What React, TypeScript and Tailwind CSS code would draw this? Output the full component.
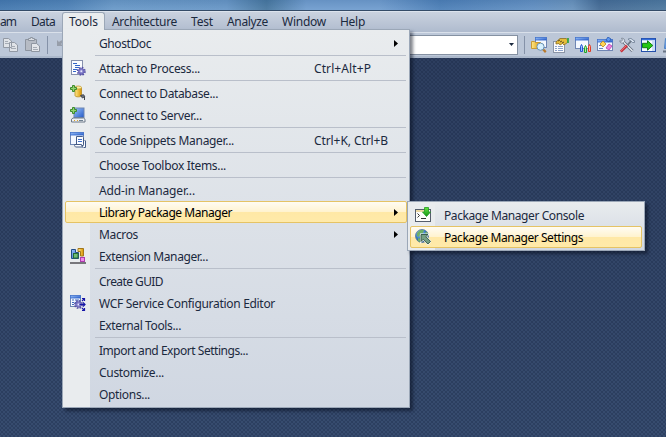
import React, { useLayoutEffect, useRef } from "react";

/** Text whose tracking is adjusted so that it spans the given width. */
function Label({ text, width, className = "" }: { text: string; width: number; className?: string }) {
  const ref = useRef<HTMLSpanElement>(null);
  useLayoutEffect(() => {
    const el = ref.current;
    if (!el) return;
    el.style.letterSpacing = "0px";
    const natural = el.getBoundingClientRect().width;
    el.style.letterSpacing = `${(width - natural) / text.length}px`;
  }, [text, width]);
  return (
    <span ref={ref} className={`inline-block whitespace-pre ${className}`}>
      {text}
    </span>
  );
}

function Svg({ children }: { children: React.ReactNode }) {
  return (
    <svg width="16" height="16" viewBox="0 0 16 16" fill="none" className="block shrink-0">
      {children}
    </svg>
  );
}

function Defs() {
  return (
    <svg width="0" height="0" className="absolute">
      <defs>
        <linearGradient id="blue" x1="0" y1="0" x2="1" y2="1">
          <stop offset="0" stopColor="#9cc4fb" />
          <stop offset="1" stopColor="#2459c6" />
        </linearGradient>
        <linearGradient id="gold" x1="0" y1="0" x2="1" y2="0">
          <stop offset="0" stopColor="#ffe98a" />
          <stop offset="1" stopColor="#d99300" />
        </linearGradient>
        <linearGradient id="green" x1="0" y1="0" x2="0" y2="1">
          <stop offset="0" stopColor="#63e23d" />
          <stop offset="1" stopColor="#149414" />
        </linearGradient>
        <radialGradient id="globe" cx="0.35" cy="0.3" r="0.8">
          <stop offset="0" stopColor="#a9d2ff" />
          <stop offset="0.5" stopColor="#397fc4" />
          <stop offset="1" stopColor="#173b75" />
        </radialGradient>
      </defs>
    </svg>
  );
}

const Plus = () => <path d="M2.5 0.5h2v2h2v2h-2v2h-2v-2h-2v-2h2z" fill="#92d36e" stroke="#3c8b2c" />;
const Gear = ({ x, y }: { x: number; y: number }) => (
  <g transform={`translate(${x} ${y})`}>
    <circle r="3.6" stroke="#5550a5" strokeWidth="1.8" strokeDasharray="1.6 1.23" />
    <circle r="2.8" fill="#8581cc" stroke="#6661b4" />
    <circle r="1" fill="#e8e8fb" />
  </g>
);
const Win = ({ w = 14, h = 12, x = 0.5, y = 0.5 }: { w?: number; h?: number; x?: number; y?: number }) => (
  <>
    <rect x={x} y={y} width={w} height={h} fill="#f4f8ff" stroke="#6f86b3" />
    <rect x={x} y={y} width={w} height="2.6" fill="url(#blue)" stroke="#3d70cf" strokeWidth="0.6" />
  </>
);

const icons: Record<string, React.ReactNode> = {
  process: (
    <Svg>
      <rect x="1.5" y="0.5" width="11" height="14" fill="#fbfcff" stroke="#8791ad" />
      <path d="M3 3.5h4M5 5.5h5M5 7.5h4M3 9.5h4M3 11.5h3" stroke="#3566c8" />
      <Gear x={11.3} y={11.3} />
    </Svg>
  ),
  database: (
    <Svg>
      <path d="M5 3v7.5c0 1.8 6.5 1.8 6.5 0V3z" fill="url(#gold)" stroke="#b98a1c" strokeWidth="0.8" />
      <ellipse cx="8.2" cy="2.5" rx="3.3" ry="1.5" fill="#ffed9b" stroke="#c09a35" strokeWidth="0.8" />
      <path d="M10.5 10.5l3-.8 1.2 1.8-2.2 1.5z" fill="#6e737d" stroke="#41464f" />
      <path d="M14.5 11.5v3.5" stroke="#41464f" />
      <Plus />
    </Svg>
  ),
  server: (
    <Svg>
      <rect x="4" y="1" width="10" height="9.5" fill="url(#blue)" stroke="#6e86b0" />
      <path d="M1.5 15v-2.8l1.5-1.2h10.5l1.5 1.2V15z" fill="#edf0f4" stroke="#6d7887" />
      <path d="M4 13.5h1M7 13.5h1" stroke="#e0a527" />
      <path d="M9 13.5h4" stroke="#6e8090" />
      <Plus />
    </Svg>
  ),
  snippets: (
    <Svg>
      <Win w={13} h={12} />
      <path d="M6.5 4.5h6l1 1v8h-7z" fill="#fbfcff" stroke="#455c87" />
      <path d="M8 7.5h4M8 9.5h4" stroke="#3d6eca" />
      <path d="M4.5 12.5h7c.2 1.5.7 2.5 1.5 2.5H6c-1 0-1.5-1-1.5-2.5zM14.5 8l1 1v6.5h-2" fill="#fbfcff" stroke="#455c87" />
    </Svg>
  ),
  extension: (
    <Svg>
      <path d="M1.5 1.5h4v3h3v6h-7z" fill="url(#blue)" stroke="#234e88" />
      <path d="M8 .5h5.5v7.5h-3V3.5H8z" fill="url(#gold)" stroke="#a3771a" />
      <rect x="3.5" y="5.5" width="4.5" height="4.5" fill="#70bd72" stroke="#246c34" />
      <rect x="10.5" y="9.5" width="4" height="4" fill="#ef8cec" stroke="#ad3dae" />
      <path d="M0 15h16" stroke="#77777b" strokeWidth="2" />
    </Svg>
  ),
  wcf: (
    <Svg>
      <Win w={10} h={11} />
      <path d="M2 5h2M5 5h4M2 7.5h2M5 7.5h3M2 9.5h2" stroke="#3e69bd" />
      <Gear x={8.5} y={9.5} />
      <path d="M9.5 9.5h6M13 7.5l2 2-2 2M12 6l2.3-2.3M12 3.5h2.5V6M12 13l2.3 2.3M12 15.5h2.5V13" stroke="#1716a7" strokeWidth="1.2" />
    </Svg>
  ),
  console: (
    <Svg>
      <rect x="0.5" y="2.5" width="15" height="12" fill="#fdfdfb" stroke="#555e6c" />
      <path d="M1 4h8" stroke="#e8cf8d" strokeWidth="1.6" />
      <path d="M2.5 6.5l2 2-2 2M6 11.5h5" stroke="#333" />
      <path d="M9.5 .5h4v4.5h2l-4 4.5-4-4.5h2z" fill="url(#green)" stroke="#1f9c20" strokeWidth="0.8" />
    </Svg>
  ),
  settings: (
    <Svg>
      <circle cx="7" cy="7" r="6.5" fill="url(#globe)" stroke="#426a9a" strokeWidth="0.7" />
      <path d="M2 4l3-3 4 0-1 3-3 1-1 3-2-1zM10 3l2 0 1.5 4-2-1zM3 9l3 1-1 3-2-1z" fill="#6eaf68" />
      <path d="M6 5.5h7l-2.2 2.2 4.7 4.7-2.6 2.6-4.7-4.7L6 12.5z" fill="#76a084" stroke="#f0f5f2" strokeWidth="2" />
      <path d="M6 5.5h7l-2.2 2.2 4.7 4.7-2.6 2.6-4.7-4.7L6 12.5z" fill="#76a084" stroke="#2d5140" strokeWidth="0.9" />
    </Svg>
  ),
  find: (
    <Svg>
      <Win x={4.5} w={11} h={10} />
      <path d="M.5 4.5h3l1 1h5v6h-9z" fill="url(#gold)" stroke="#c99a35" />
      <path d="M12 12.3l2.8 2.8" stroke="#b9792b" strokeWidth="2.2" />
      <circle cx="9.5" cy="9.7" r="3.6" fill="#d7f1ff" stroke="#6a91b3" />
    </Svg>
  ),
  properties: (
    <Svg>
      <rect x=".5" y="4.5" width="11" height="11" fill="#fbfbfd" stroke="#8b95a7" />
      <path d="M2 9.5h2M5 9.5h5M2 11.5h2M5 11.5h5M2 13.5h2M5 13.5h5" stroke="#8ba2cb" />
      <path d="M3 5l4-3.5h6l1.5 1v3L11 8 9.5 6.5 7 8 6 6.5 3 7z" fill="#e5bd3b" stroke="#8b6c22" strokeWidth=".8" />
      <path d="M5 4l2-1m0 2 2-1m0 2 2-1" stroke="#604c24" />
      <path d="M15 1v5" stroke="#36a548" strokeWidth="1.8" />
    </Svg>
  ),
  toolbox: (
    <Svg>
      <Win w={13} h={11} />
      <path d="M5.5 9.5l1-2 1 2v5h-2z" fill="#9cc2ff" stroke="#2055d1" />
      <path d="M9.5 10.5l1-2 1 2v5h-2z" fill="#afe8a3" stroke="#20a22b" />
      <path d="M13.5 9.5l1-2 1 2v5h-2z" fill="#ffb09e" stroke="#e23a20" />
    </Svg>
  ),
  start: (
    <Svg>
      <Win y={2.5} w={15} h={11} />
      <path d="M2 8.5h3M2 11.5h4" stroke="#6989bd" />
      <path d="M6 4l3 3-3 3-3-3z" fill="#ffd454" stroke="#bb861e" strokeWidth=".8" />
      <path d="M11 0l3 2-2 3-3-2z" fill="#5d96f0" stroke="#2457af" strokeWidth=".8" />
      <path d="M12 7l3 2-3 4-3-2z" fill="#ef83df" stroke="#b33fae" strokeWidth=".8" />
    </Svg>
  ),
  tools: (
    <Svg>
      <path d="M3.5 4l10 10" stroke="#626c7a" strokeWidth="3" />
      <path d="M3.5 4l10 10" stroke="#edf2f7" strokeWidth="1.3" />
      <path d="M2.5 1.2l1 1.8-1 1.2-1.8-.4C1 6 3 6.7 4.3 5.8L5.7 4.3C6 2.5 4.5.9 2.5 1.2z" fill="#dce4ed" stroke="#6c7684" strokeWidth=".7" />
      <path d="M8.5 8l3.5-3.8" stroke="#6c7684" strokeWidth="1.8" />
      <path d="M9 2.2c2-1.5 4-.7 5 1l1.5.5v1.8h-2L12 4z" fill="#d9e2ef" stroke="#6c7c92" strokeWidth=".8" />
      <path d="M8 8.5L1.8 14.7" stroke="#c52f3a" strokeWidth="2.6" />
      <path d="M7.5 8.5L2 13.9" stroke="#f17b7b" strokeWidth=".8" />
    </Svg>
  ),
  go: (
    <Svg>
      <rect x=".5" y="1.5" width="14" height="13" fill="#f7fbff" stroke="#244faa" />
      <path d="M1 2.5h13" stroke="#356ed9" strokeWidth="1.5" />
      <path d="M11 4h3v10h-3z" fill="#c8dcf7" />
      <path d="M1.5 6.3h5V3.8l5.3 4.7-5.3 4.7v-2.5h-5z" fill="#25c813" stroke="#137d14" />
    </Svg>
  ),
  screen: (
    <Svg>
      <path d="M2.5 1.5h12v10H1.5z" fill="url(#blue)" stroke="#4b83c4" />
      <path d="M0 14.5h16" stroke="#6a7585" strokeWidth="2" />
    </Svg>
  ),
  copy: (
    <Svg>
      <path d="M.5 1.5h5l3 2.5v6.5h-8zM6.5 5.5h5l3 2.5v6.5h-8z" fill="#e0e3e8" stroke="#9299a4" />
      <path d="M2 4.5h3M2 6.5h4M8 9.5h4M8 11.5h5" stroke="#a5abb4" />
    </Svg>
  ),
  paste: (
    <Svg>
      <path d="M.5 2.5h11v11H.5z" fill="#b6bbc4" stroke="#8d949f" />
      <path d="M3.5 3.5v-2h2V.5h2v1h2v2z" fill="#dadde2" stroke="#8d949f" />
      <path d="M6.5 6.5h5l3 2.5v5.5h-8z" fill="#e4e6ea" stroke="#8f96a1" />
      <path d="M8 10.5h4M8 12.5h5" stroke="#a5abb4" />
    </Svg>
  ),
};

type Entry = { text: string; w: number; icon?: string; keys?: string; kw?: number; arrow?: boolean; active?: boolean } | null;

const toolsMenu: Entry[] = [
  { text: "GhostDoc", w: 52, arrow: true },
  null,
  { text: "Attach to Process...", w: 101, icon: "process", keys: "Ctrl+Alt+P", kw: 57 },
  null,
  { text: "Connect to Database...", w: 119, icon: "database" },
  { text: "Connect to Server...", w: 103, icon: "server" },
  null,
  { text: "Code Snippets Manager...", w: 135, icon: "snippets", keys: "Ctrl+K, Ctrl+B", kw: 74 },
  null,
  { text: "Choose Toolbox Items...", w: 127 },
  null,
  { text: "Add-in Manager...", w: 96 },
  { text: "Library Package Manager", w: 133, arrow: true, active: true },
  { text: "Macros", w: 39, arrow: true },
  { text: "Extension Manager...", w: 109, icon: "extension" },
  null,
  { text: "Create GUID", w: 64 },
  { text: "WCF Service Configuration Editor", w: 176, icon: "wcf" },
  { text: "External Tools...", w: 82 },
  null,
  { text: "Import and Export Settings...", w: 149 },
  { text: "Customize...", w: 65 },
  { text: "Options...", w: 51 },
];

const packageMenu: Entry[] = [
  { text: "Package Manager Console", w: 140, icon: "console" },
  { text: "Package Manager Settings", w: 139, icon: "settings", active: true },
];

function Menu({ entries }: { entries: Entry[] }) {
  return (
    <>
      {entries.map((e, i) =>
        e === null ? (
          <div key={i} className="h-[3px] pt-px pr-[3px] pl-8">
            <div className="h-px bg-[#b9bfca]" />
          </div>
        ) : (
          <div key={i} className="relative mr-[2px] ml-[2px] flex h-[22px] items-center pl-[5px]">
            {e.active && (
              <div className="absolute inset-0 rounded-[2px] border border-[#e5c365] bg-[linear-gradient(180deg,#fffcf3_0%,#fff3d0_48%,#ffe8a6_50%,#ffeaa9_100%)]" />
            )}
            <div className="relative w-[29px]">{e.icon && icons[e.icon]}</div>
            <div className={`relative flex-1 pt-[2px] ${e.active ? "text-black" : "text-[#1b293e]"}`}>
              <Label text={e.text} width={e.w} />
            </div>
            {e.keys && (
              <div className="relative w-[93px] pt-[2px] text-[#1b293e]">
                <Label text={e.keys} width={e.kw ?? 60} />
              </div>
            )}
            {e.arrow && (
              <svg width="4" height="7" viewBox="0 0 4 7" className="relative mr-[9px]">
                <path d="M0 0l4 3.5L0 7z" fill="#000" />
              </svg>
            )}
          </div>
        )
      )}
    </>
  );
}

const topItems: [string, number, string][] = [
  ["am", 16, "w-[31px]"],
  ["Data", 24, "w-[38px]"],
  ["Tools", 29, "w-[43px]"],
  ["Architecture", 65, "w-[79px]"],
  ["Test", 22, "w-9"],
  ["Analyze", 41, "w-[55px]"],
  ["Window", 44, "w-[58px]"],
  ["Help", 25, "w-10"],
];

const panel =
  "border border-[#9ba7b7] bg-[linear-gradient(90deg,#e9ecee_27px,transparent_27px),linear-gradient(180deg,#e9ecee,#d0d7e2)] py-[2px] shadow-[3px_3px_3px_rgba(5,12,28,0.5)]";

export default function App() {
  return (
    <div className="relative flex h-[437px] w-[666px] flex-col overflow-hidden bg-[#2c3d5e] font-['Noto_Sans','Open_Sans',sans-serif] text-[12px] leading-[18px]">
      <Defs />
      <div className="h-[10px] shrink-0 bg-[linear-gradient(180deg,rgba(30,65,110,0.12),rgba(255,255,255,0.06)),linear-gradient(90deg,#4479b0_0%,#4f83b8_10%,#6a9ac9_17%,#6897c7_34%,#47779f_40%,#709dcf_46%,#709dcf_57%,#4d80b8_66%,#6290c3_80%,#6993bd_86%,#446b95_90%,#4d789f_100%)]" />
      <div className="h-px shrink-0 bg-[#344b67]" />
      <div className="flex h-[21px] shrink-0 border-t border-[#dce3ed] bg-[linear-gradient(180deg,#cad2df,#afbbce)] text-[#1b293e]">
        {topItems.map(([text, width, box]) => (
          <div
            key={text}
            className={`flex shrink-0 items-center ${box} ${
              text === "Tools" ? "ml-[-7px] mr-[7px] rounded-t-[3px] border border-b-0 border-[#9ba7b7] bg-[#e9ecee] pb-[2px] pl-[6px]" : "pb-px"
            }`}
          >
            <Label text={text} width={width} />
          </div>
        ))}
      </div>
      <div className="flex h-[26px] shrink-0 items-center justify-between border-t border-b-2 border-t-[#d9e0ea] border-b-[#aab7ca] bg-[#bcc7d8]">
        <div className="flex items-center gap-[6px] pl-[3px]">
          {icons.copy}
          {icons.paste}
          <div className="h-[18px] w-px bg-[#8592a8]" />
          <svg width="14" height="16" viewBox="0 0 14 16" className="ml-[2px]">
            <path d="M1 3v6h6L5 7c3-3 6-1 7 1-1-5-6-6-9-3z" fill="#979eaa" />
          </svg>
        </div>
        <div className="flex items-center">
          <div className="flex h-5 w-[118px] items-center justify-end border border-[#8591a2] bg-white pr-[3px]">
            <svg width="5" height="3" viewBox="0 0 5 3">
              <path d="M0 0h5L2.5 3z" fill="#1b293e" />
            </svg>
          </div>
          <div className="mr-[6px] ml-[6px] h-[18px] w-px bg-[#8592a8]" />
          <div className="flex w-[135px] gap-[6px]">
            {icons.find}
            {icons.properties}
            {icons.toolbox}
            {icons.start}
            {icons.tools}
            {icons.go}
            {icons.screen}
          </div>
        </div>
      </div>
      <div className="flex-1 bg-[radial-gradient(rgba(20,34,62,0.45)_0.6px,transparent_0.9px),radial-gradient(rgba(20,34,62,0.45)_0.6px,transparent_0.9px),linear-gradient(180deg,#2d3e5f,#374c6f)] bg-[length:4px_4px,4px_4px,100%_100%] bg-[position:0_0,2px_2px,0_0]" />

      <div className={`absolute top-[29px] left-[62px] h-[379px] w-[348px] ${panel}`}>
        <Menu entries={toolsMenu} />
      </div>
      <div className="absolute top-[29px] left-[63px] h-px w-[41px] bg-[#e9ecee]" />
      <div className={`absolute top-[201px] left-[407px] h-[50px] w-[238px] ${panel}`}>
        <Menu entries={packageMenu} />
      </div>
    </div>
  );
}
